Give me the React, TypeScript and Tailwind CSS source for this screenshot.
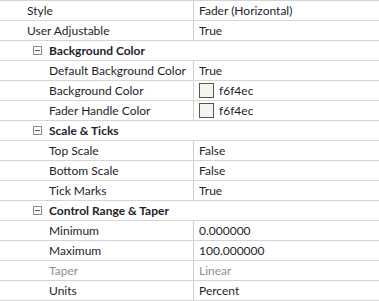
import React from "react";

type Row =
  | { kind: "prop"; name: string; value: string; indent?: boolean; swatch?: string; disabled?: boolean }
  | { kind: "group"; name: string };

const rows: Row[] = [
  { kind: "prop", name: "Style", value: "Fader (Horizontal)" },
  { kind: "prop", name: "User Adjustable", value: "True" },
  { kind: "group", name: "Background Color" },
  { kind: "prop", name: "Default Background Color", value: "True", indent: true },
  { kind: "prop", name: "Background Color", value: "f6f4ec", indent: true, swatch: "#f6f4ec" },
  { kind: "prop", name: "Fader Handle Color", value: "f6f4ec", indent: true, swatch: "#f6f4ec" },
  { kind: "group", name: "Scale & Ticks" },
  { kind: "prop", name: "Top Scale", value: "False", indent: true },
  { kind: "prop", name: "Bottom Scale", value: "False", indent: true },
  { kind: "prop", name: "Tick Marks", value: "True", indent: true },
  { kind: "group", name: "Control Range & Taper" },
  { kind: "prop", name: "Minimum", value: "0.000000", indent: true },
  { kind: "prop", name: "Maximum", value: "100.000000", indent: true },
  { kind: "prop", name: "Taper", value: "Linear", indent: true, disabled: true },
  { kind: "prop", name: "Units", value: "Percent", indent: true },
];

function CollapseIcon() {
  return (
    <svg width="9" height="9" viewBox="0 0 9 9" className="shrink-0">
      <rect x="0.5" y="0.5" width="8" height="8" fill="#ffffff" stroke="#8c8c8c" />
      <line x1="2" y1="4.5" x2="7" y2="4.5" stroke="#5a5a5a" />
    </svg>
  );
}

function PropRow({ row }: { row: Row }) {
  if (row.kind === "group") {
    return (
      <div className="flex h-[20px] items-center border-b border-[#d5d5d5]">
        <div className="flex items-center pl-[33px]">
          <CollapseIcon />
          <span className="ml-[7px] font-bold">{row.name}</span>
        </div>
      </div>
    );
  }
  const color = row.disabled ? "text-[#8f8f8f]" : "text-[#1e1e2a]";
  return (
    <div className="flex h-[20px] border-b border-[#d5d5d5]">
      <div
        className={`flex w-[194px] shrink-0 items-center border-r border-[#cfcfcf] ${
          row.indent ? "pl-[49px]" : "pl-[27px]"
        } ${color}`}
      >
        {row.name}
      </div>
      <div className={`flex flex-1 items-center pl-[5px] ${color}`}>
        {row.swatch && (
          <span
            className="mr-[5px] h-[15px] w-[15px] border border-[#555555]"
            style={{ backgroundColor: row.swatch }}
          />
        )}
        {row.value}
      </div>
    </div>
  );
}

export default function App() {
  return (
    <div
      className="w-[379px] h-[301px] overflow-hidden bg-white text-[12px] leading-none text-[#1e1e2a]"
      style={{ fontFamily: "Lato, 'Noto Sans', sans-serif" }}
    >
      <div className="border-t border-[#d5d5d5]">
        {rows.map((row, i) => (
          <PropRow key={i} row={row} />
        ))}
      </div>
    </div>
  );
}
